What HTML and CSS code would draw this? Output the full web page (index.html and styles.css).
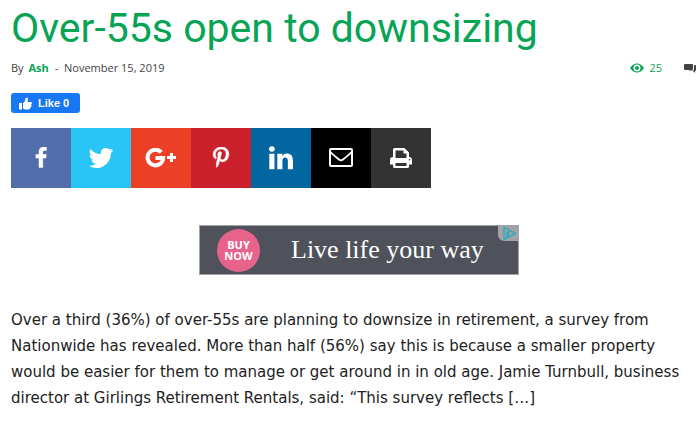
FILE: index.html
```html
<!DOCTYPE html>
<html lang="en">
<head>
<meta charset="utf-8">
<meta name="viewport" content="width=device-width, initial-scale=1">
<title>Over-55s open to downsizing</title>
<link rel="stylesheet" href="styles.css">
</head>
<body>
<article class="post">
  <h1 class="title">Over-55s open to downsizing</h1>
  <div class="meta">
    <div class="byline">By <a class="author" href="#ash">Ash</a> <span class="dash">-</span> <time datetime="2019-11-15">November 15, 2019</time></div>
    <div class="stats">
      <span class="views">
        <svg class="eye" viewBox="0 0 14 10" aria-hidden="true"><path fill="currentColor" fill-rule="evenodd" d="M0 5Q3 .5 7 .5T14 5Q11 9.500 7 9.500T0 5zM7 1.500a3.500 3.500 0 1 0 0 7a3.500 3.500 0 1 0 0-7zM7 3a2 2 0 1 1 0 4a2 2 0 1 1 0-4z"/></svg>
        25
      </span>
      <a class="comments" href="#comments" aria-label="Comments"><svg class="bubbles" viewBox="0 0 13 10" aria-hidden="true"><path fill="currentColor" d="M1 1h7q1 0 1 1v4q0 1-1 1H1Q0 7 0 6V2Q0 1 1 1zM10 2h1q1 0 1 1v4q0 1-1 1v2L9 8H5V7.500h4q1 0 1-1z"/></svg></a>
    </div>
  </div>
  <button class="like" type="button">
    <svg class="thumb" viewBox="0 0 13 13" aria-hidden="true"><path fill="currentColor" d="M0 6h3v6.500H0zM4 6q2-1 2.500-4Q6.500.5 7.500.5C9 .5 9.300 2 8.500 5H12q1 .2 1 1.200t-1 1.300q.8.500.5 1.300T11.700 10q.4 1.200-.8 1.500Q10.800 12.500 9.500 12.500H6L4 11.500z"/></svg>
    Like 0
  </button>
  <nav class="share" aria-label="Share">
    <a class="tile facebook" href="#facebook" aria-label="Facebook"><svg class="icon small" viewBox="0 0 1792 1792"><path class="bold" d="M1343 12v264h-157q-86 0-116 36t-30 108v189h293l-39 296h-254v759h-306v-759h-255v-296h255v-218q0-186 104-288.500t277-102.500q147 0 228 12z"/></svg></a>
    <a class="tile twitter" href="#twitter" aria-label="Twitter"><svg class="icon" viewBox="0 0 1792 1792"><path d="M1684 408q-67 98-162 167 1 14 1 42 0 130-38 259.500t-115.500 248.500-184.500 210.500-258 146-323 54.500q-271 0-496-145 35 4 78 4 225 0 401-138-105-2-188-64.500t-114-159.500q33 5 61 5 43 0 85-11-112-23-185.500-111.500t-73.500-205.500v-4q68 38 146 41-66-44-105-115t-39-154q0-88 44-163 121 149 294.500 238.500t371.500 99.500q-8-38-8-74 0-134 94.500-228.500t228.500-94.500q140 0 236 102 109-21 205-78-37 115-142 178 93-10 186-50z"/></svg></a>
    <a class="tile google" href="#google" aria-label="Google Plus"><svg class="icon wide" viewBox="0 0 32 20"><path class="line heavy" d="M16.200 4.300A7.800 7.800 0 1 0 18.200 10H10.500"/><path class="line thin" d="M26.500 5v9M22 9.500h9"/></svg></a>
    <a class="tile pinterest" href="#pinterest" aria-label="Pinterest"><svg class="icon small" viewBox="0 0 1792 1792"><path class="bold" d="M256 597q0-108 37.500-203.500t103.500-166.500 152-123 185-78 202-26q158 0 294 66.500t221 193.500 85 287q0 96-19 188t-60 177-100 149.500-145 103-189 38.500q-68 0-135-32t-96-88q-10 39-28 112.500t-23.500 95-20.500 71-26 71-32 62.500-46 77.500-62 86.500l-14 5-9-10q-15-157-15-188 0-92 21.500-206.500t66.500-287.500 52-203q-32-65-32-169 0-83 52-156t132-73q61 0 95 40.500t34 102.500q0 66-44 191t-44 187q0 63 45 104.500t109 41.500q55 0 102-25t78.500-68 56-95 38-110.500 20-111 6.500-99.500q0-173-109.500-269.500t-285.500-96.500q-200 0-334 129.500t-134 328.500q0 44 12.500 85t27 65 27 45.500 12.500 30.500q0 28-15 73t-37 45q-2 0-17-3-51-15-90.500-56t-61-94.500-32.500-108-11-106.500z"/></svg></a>
    <a class="tile linkedin" href="#linkedin" aria-label="LinkedIn"><svg class="icon" viewBox="0 0 1792 1792"><path d="M477 625v991h-330v-991h330zm21-306q1 73-50.500 122t-135.500 49h-2q-82 0-132-49t-50-122q0-74 51.500-122.500t134.500-48.500 133 48.500 51 122.500zm1166 729v568h-329v-530q0-105-40.500-164.500t-126.500-59.500q-63 0-105.500 34.500t-63.500 85.500q-11 30-11 81v553h-329q2-399 2-647t-1-296l-1-48h329v144h-2q20-32 41-56t56.500-52 87-43.500 114.500-15.500q171 0 275 113.500t104 332.500z"/></svg></a>
    <a class="tile email" href="#email" aria-label="Email"><svg class="icon" viewBox="0 0 28 28"><rect class="line" x="3" y="5" width="22" height="17" rx="1"/><path class="line" d="M3 7.500Q5 10 12 15.500Q14 17 16 15.500Q23 10 25 7.500"/></svg></a>
    <a class="tile print" href="#print" aria-label="Print"><svg class="icon" viewBox="0 0 28 28"><path fill-rule="evenodd" d="M6 13V5.500Q6 4 7.500 4H17.500L22 8.500V13Q25 13 25 16V20.500H22V22.500Q22 24 20.500 24H7.500Q6 24 6 22.500V20.500H3V16Q3 13 6 13zM8.500 6.500V14H19.500V9.500H16.500V6.500zM8.500 19V22H19.500V19zM22.500 15a.8.800 0 1 0 0 1.600a.8.800 0 1 0 0-1.600z"/></svg></a>
  </nav>
  <aside class="ad" aria-label="Advertisement">
    <a class="buy" href="#buy"><span>BUY</span><span>NOW</span></a>
    <span class="slogan">Live life your way</span>
    <svg class="choices" viewBox="0 0 20 15" aria-hidden="true"><path fill="#a3a4a7" d="M0 0h20v15H6Q0 14 0 8z"/><path fill="none" stroke="#35a9bd" stroke-width="1.500" d="M9 5.500v5.500H10.500V5M6 1.500L17.500 7.500L6 13.500z"/></svg>
  </aside>
  <p class="excerpt">Over a third (36%) of over-55s are planning to downsize in retirement, a survey from Nationwide has revealed. More than half (56%) say this is because a smaller property would be easier for them to manage or get around in in old age. Jamie Turnbull, business director at Girlings Retirement Rentals, said: “This survey reflects […]</p>
</article>
</body>
</html>
```
FILE: styles.css
```css
* {
  box-sizing: border-box;
}

body {
  margin: 0;
  background: #fff;
}

a {
  color: inherit;
  text-decoration: none;
}

svg {
  display: block;
}

.post {
  padding: 3px 0 0 11px;
}

.title {
  margin: 0;
  color: #08a456;
  font: 400 41px/50px Roboto, sans-serif;
}

.meta {
  display: flex;
  justify-content: space-between;
  margin-top: 7px;
  color: #444;
  font: 11px/16px "Open Sans", sans-serif;
}

.author {
  margin: 0 2px;
  color: #08a456;
  font-weight: 700;
}

.dash {
  margin: 0 3px 0 1px;
}

.stats,
.views {
  display: flex;
  align-items: center;
}

.stats {
  gap: 22px;
}

.views {
  gap: 5px;
  color: #08a456;
}

.eye {
  width: 14px;
  height: 10px;
}

.bubbles {
  width: 13px;
  height: 10px;
}

.like {
  display: flex;
  align-items: center;
  gap: 6px;
  height: 20px;
  margin-top: 17px;
  padding: 0 11px 0 8px;
  border: 0;
  border-radius: 3px;
  background: #1877f2;
  color: #fff;
  font: 700 11px/20px "Liberation Sans", Arial, sans-serif;
}

.thumb {
  width: 13px;
  height: 13px;
}

.share {
  display: flex;
  margin-top: 15px;
}

.tile {
  display: flex;
  align-items: center;
  justify-content: center;
  width: 60px;
  height: 60px;
}

.facebook { background: #516eab; }
.twitter { background: #29c5f6; }
.google { background: #eb4026; }
.pinterest { background: #ca212a; }
.linkedin { background: #0266a0; }
.email { background: #000; }
.print { background: #333; }

.icon {
  width: 28px;
  height: 28px;
  fill: #fff;
}

.small {
  width: 22px;
  height: 22px;
}

.wide {
  width: 32px;
  height: 20px;
}

.bold {
  stroke: #fff;
  stroke-width: 40;
}

.line {
  fill: none;
  stroke: #fff;
  stroke-width: 2;
}

.heavy {
  stroke-width: 4;
}

.thin {
  stroke-width: 3;
}

.ad {
  position: relative;
  display: flex;
  align-items: center;
  gap: 31px;
  width: 320px;
  height: 50px;
  margin: 37px auto 0 188px;
  padding-left: 17px;
  border: 1px solid #a3a4a7;
  background: #50525b;
  color: #fff;
}

.buy {
  display: flex;
  flex-direction: column;
  align-items: center;
  justify-content: center;
  width: 43px;
  height: 43px;
  border-radius: 50%;
  background: #e8638b;
  font: 700 11px/11px "Open Sans", sans-serif;
}

.slogan {
  font: 26px/40px "Liberation Serif", "Times New Roman", serif;
  white-space: nowrap;
}

.choices {
  position: absolute;
  top: 0;
  right: 0;
  width: 20px;
  height: 15px;
}

.excerpt {
  margin: 32px 0 0;
  padding-right: 5px;
  color: #222;
  font: 15px/26px Verdana, "DejaVu Sans", sans-serif;
}
```
